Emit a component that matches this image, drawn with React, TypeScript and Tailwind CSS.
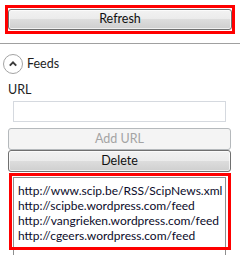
import React from "react";

const btn =
  "shrink-0 flex items-center justify-center rounded-[3px] border border-[#707070] bg-[linear-gradient(to_bottom,#f2f2f2_0%,#ebebeb_50%,#dddddd_50%,#cfcfcf_100%)] text-[12.5px] text-[#101010] shadow-[inset_0_0_0_1px_rgba(255,255,255,0.7)]";

export default function App() {
  const urls = [
    "http://www.scip.be/RSS/ScipNews.xml",
    "http://scipbe.wordpress.com/feed",
    "http://vangrieken.wordpress.com/feed",
    "http://cgeers.wordpress.com/feed",
  ];
  return (
    <div
      className="w-[240px] h-[255px] overflow-hidden bg-white flex flex-col"
      style={{ fontFamily: 'Lato, "Segoe UI", sans-serif' }}
    >
      <div className="shrink-0 ml-[5px] mt-[5px] w-[230px] h-[29px] border-[3px] border-[#ff0000] flex">
        <div className={btn + " flex-1 mt-px mb-px leading-none"}>Refresh</div>
      </div>
      <div className="shrink-0 mt-[9px] h-px w-full bg-[#a0a0a0]" />
      <div className="shrink-0 mt-[10px] ml-[3px] flex items-center gap-[4px] h-[20px]">
        <svg width="20" height="20" viewBox="0 0 20 20">
          <circle cx="10" cy="10" r="9.5" fill="white" stroke="#a3a3a3" strokeWidth="1" />
          <path d="M6.8 11.6 L10 8.4 L13.2 11.6" fill="none" stroke="#3a3a3a" strokeWidth="2" />
        </svg>
        <span className="text-[12.5px] text-[#1e1e1e] leading-none">Feeds</span>
      </div>
      <div className="shrink-0 ml-[8px] mt-[9px] text-[12.5px] text-[#1e1e1e] leading-[14px]">URL</div>
      <div className="shrink-0 ml-[13px] mt-[4px] w-[213px] h-[21px] border border-[#d5d9df] bg-white" />
      <div className="shrink-0 ml-[8px] mt-[6px] w-[223px] h-[22px] rounded-[3px] border border-[#b5b9bc] bg-[#f4f4f4] flex items-center justify-center text-[12.5px] text-[#a4a4a4] leading-none">
        Add URL
      </div>
      <div className={btn + " ml-[8px] w-[223px] h-[22px] leading-none"}>Delete</div>
      <div className="relative mt-[5px] shrink-0">
        <div className="ml-[13px] w-[213px] h-[100px] border border-[#8e8f8f] px-[4px] pt-[5px]">
          {urls.map((u) => (
            <div key={u} className="text-[12px] leading-[15px] text-[#0b0b2a] whitespace-nowrap">
              {u}
            </div>
          ))}
        </div>
        <div className="absolute left-[9px] top-[-4px] w-[222px] h-[77px] border-[3px] border-[#ff0000]" />
      </div>
    </div>
  );
}
